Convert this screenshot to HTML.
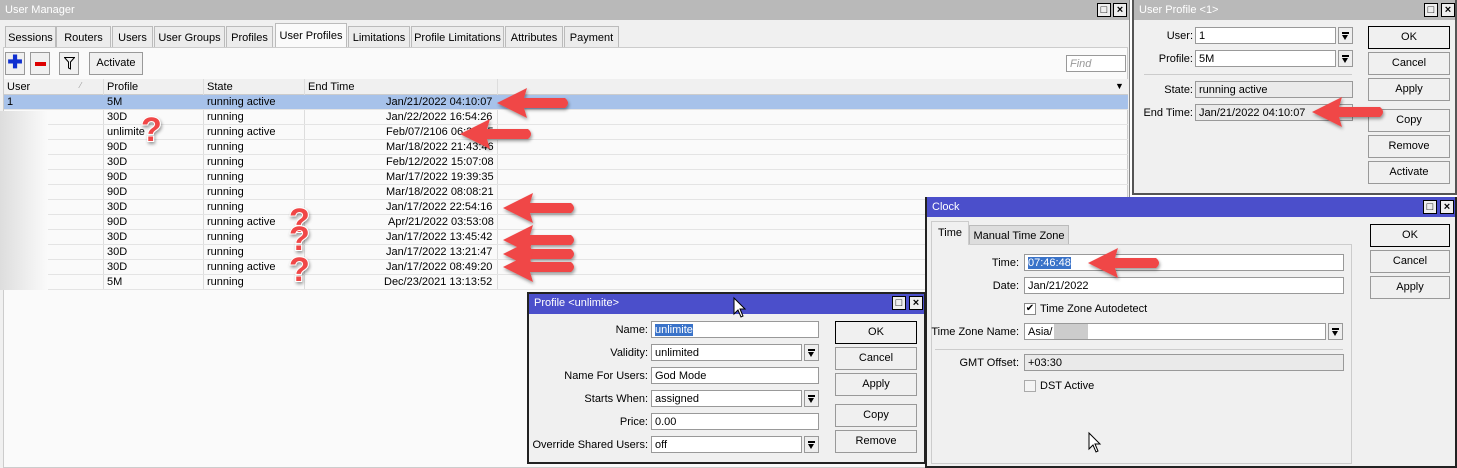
<!DOCTYPE html>
<html><head><meta charset="utf-8"><style>
*{box-sizing:border-box;margin:0;padding:0}
body{width:1457px;height:468px;position:relative;overflow:hidden;background:#fff;font:11px "Liberation Sans",sans-serif;color:#000}
.abs{position:absolute}
.title{position:absolute;left:0;right:0;top:0;height:20px;color:#fff;padding:4px 0 0 5px;font-size:11px}
.wb{position:absolute;top:3px;width:14px;height:14px;border:1px solid #000;background:#eee;font-size:11px;line-height:12px;text-align:center;font-weight:bold}
.tab{position:absolute;top:26px;height:21px;border:1px solid #bbb;border-bottom:none;background:#ececec;padding-top:5px;text-align:center;white-space:nowrap}
.btn{position:absolute;border:1px solid #999;background:#f0f0f0;text-align:center;line-height:21px;height:23px}
.inp{position:absolute;height:17px;border:1px solid #999;background:#fff;padding:1px 3px;white-space:nowrap;line-height:14px}
.ro{background:#eaeaea}
.dd{position:absolute;width:15px;height:17px;border:1px solid #999;background:#eee}
.dd::before{content:"";position:absolute;left:3px;top:4px;width:7px;height:2px;background:#000}
.dd::after{content:"";position:absolute;left:3px;top:7px;border-left:3.5px solid transparent;border-right:3.5px solid transparent;border-top:5px solid #000}
.lbl{position:absolute;text-align:right;white-space:nowrap}
.row{position:absolute;left:5px;width:1123px;height:15px;border-bottom:1px solid #e4e4e4;white-space:nowrap}
.row span{position:absolute;top:1px}
</style></head><body>
<!-- User Manager -->
<div class="abs" style="left:0;top:0;width:1130px;height:468px;background:#f0f0f0;border-right:1px solid #888">
<div class="title" style="background:#b9b9b9">User Manager</div>
<div class="wb" style="left:1097px">□</div><div class="wb" style="left:1113px">×</div>
<div class="tab" style="left:5px;width:51px">Sessions</div>
<div class="tab" style="left:56px;width:55px">Routers</div>
<div class="tab" style="left:112px;width:41px">Users</div>
<div class="tab" style="left:154px;width:71px">User Groups</div>
<div class="tab" style="left:226px;width:47px">Profiles</div>
<div class="tab" style="left:275px;width:72px;top:23px;height:24px;background:#fafafa;padding-top:6px">User Profiles</div>
<div class="tab" style="left:348px;width:62px">Limitations</div>
<div class="tab" style="left:411px;width:93px">Profile Limitations</div>
<div class="tab" style="left:505px;width:58px">Attributes</div>
<div class="tab" style="left:564px;width:55px">Payment</div>
<div class="abs" style="left:3px;top:47px;width:1125px;height:421px;background:#fafafa;border:1px solid #ccc"></div>
<div class="btn" style="left:5px;top:52px;width:20px;color:#1030d0;font-weight:bold;font-size:18px;line-height:19px">✚</div>
<div class="btn" style="left:30px;top:52px;width:20px"><div class="abs" style="left:4px;top:9px;width:11px;height:4px;background:#d00"></div></div>
<div class="btn" style="left:59px;top:52px;width:20px"><svg class="abs" style="left:4px;top:4px" width="11" height="13"><path d="M0.5 0.5H10.5L6.5 5V12L4.5 11V5Z" fill="none" stroke="#000"/></svg></div>
<div class="btn" style="left:89px;top:52px;width:54px">Activate</div>
<div class="inp" style="left:1066px;top:55px;width:60px;color:#999;font-style:italic">Find</div>
<div class="abs" style="left:4px;top:79px;width:1124px;height:16px;background:#f0f0f0;border-bottom:1px solid #ccc"></div>
<div class="abs" style="left:7px;top:81px">User</div>
<div class="abs" style="left:80px;top:81px;font-size:8px;color:#999">⁄</div>
<div class="abs" style="left:107px;top:81px">Profile</div>
<div class="abs" style="left:207px;top:81px">State</div>
<div class="abs" style="left:308px;top:81px">End Time</div>
<div class="abs" style="left:1115px;top:81px;font-size:9px">▼</div>
<div class="abs" style="left:103px;top:79px;width:1px;height:211px;background:#ddd"></div>
<div class="abs" style="left:203px;top:79px;width:1px;height:211px;background:#ddd"></div>
<div class="abs" style="left:304px;top:79px;width:1px;height:211px;background:#ddd"></div>
<div class="abs" style="left:497px;top:79px;width:1px;height:211px;background:#ddd"></div>
<div class="row" style="top:95px;background:#a7c2ea;left:4px;width:1124px"><span style="left:3px">1</span><span style="left:103px">5M</span><span style="left:203px">running active</span><span style="left:382px">Jan/21/2022 04:10:07</span></div>
<div class="row" style="top:110px"><span style="left:102px">30D</span><span style="left:202px">running</span><span style="left:381px">Jan/22/2022 16:54:26</span></div>
<div class="row" style="top:125px"><span style="left:102px">unlimite</span><span style="left:202px">running active</span><span style="left:381px">Feb/07/2106 06:28:15</span></div>
<div class="row" style="top:140px"><span style="left:102px">90D</span><span style="left:202px">running</span><span style="left:381px">Mar/18/2022 21:43:46</span></div>
<div class="row" style="top:155px"><span style="left:102px">30D</span><span style="left:202px">running</span><span style="left:381px">Feb/12/2022 15:07:08</span></div>
<div class="row" style="top:170px"><span style="left:102px">90D</span><span style="left:202px">running</span><span style="left:381px">Mar/17/2022 19:39:35</span></div>
<div class="row" style="top:185px"><span style="left:102px">90D</span><span style="left:202px">running</span><span style="left:381px">Mar/18/2022 08:08:21</span></div>
<div class="row" style="top:200px"><span style="left:102px">30D</span><span style="left:202px">running</span><span style="left:381px">Jan/17/2022 22:54:16</span></div>
<div class="row" style="top:215px"><span style="left:102px">90D</span><span style="left:202px">running active</span><span style="left:383px">Apr/21/2022 03:53:08</span></div>
<div class="row" style="top:230px"><span style="left:102px">30D</span><span style="left:202px">running</span><span style="left:381px">Jan/17/2022 13:45:42</span></div>
<div class="row" style="top:245px"><span style="left:102px">30D</span><span style="left:202px">running</span><span style="left:381px">Jan/17/2022 13:21:47</span></div>
<div class="row" style="top:260px"><span style="left:102px">30D</span><span style="left:202px">running active</span><span style="left:381px">Jan/17/2022 08:49:20</span></div>
<div class="row" style="top:275px"><span style="left:102px">5M</span><span style="left:202px">running</span><span style="left:379px">Dec/23/2021 13:13:52</span></div>
<div class="abs" style="left:0;top:111px;width:48px;height:179px;background:linear-gradient(90deg,#ddd,#f2f2f2 70%,#fafafa)"></div>
</div>
<!-- User Profile <1> -->
<div class="abs" style="left:1132px;top:0;width:325px;height:195px;background:#f0f0f0;border:2px solid #555;border-top:none">
<div class="title" style="background:#b9b9b9">User Profile &lt;1&gt;</div>
<div class="wb" style="left:290px">□</div><div class="wb" style="left:307px">×</div>
<div class="lbl" style="left:0;width:59px;top:30px">User:</div>
<div class="inp" style="left:61px;top:27px;width:141px">1</div><div class="dd" style="left:204px;top:27px"></div>
<div class="lbl" style="left:0;width:59px;top:53px">Profile:</div>
<div class="inp" style="left:61px;top:50px;width:141px">5M</div><div class="dd" style="left:204px;top:50px"></div>
<div class="abs" style="left:10px;top:74px;width:208px;height:1px;background:#ccc"></div>
<div class="lbl" style="left:0;width:59px;top:84px">State:</div>
<div class="inp ro" style="left:61px;top:81px;width:158px">running active</div>
<div class="lbl" style="left:0;width:59px;top:107px">End Time:</div>
<div class="inp ro" style="left:61px;top:104px;width:158px">Jan/21/2022 04:10:07</div>
<div class="btn" style="left:234px;top:26px;width:82px;border-color:#000">OK</div>
<div class="btn" style="left:234px;top:52px;width:82px">Cancel</div>
<div class="btn" style="left:234px;top:78px;width:82px">Apply</div>
<div class="btn" style="left:234px;top:109px;width:82px">Copy</div>
<div class="btn" style="left:234px;top:135px;width:82px">Remove</div>
<div class="btn" style="left:234px;top:161px;width:82px">Activate</div>
</div>
<!-- Clock -->
<div class="abs" style="left:925px;top:197px;width:532px;height:271px;background:#f0f0f0;border:2px solid #222;border-top:none">
<div class="title" style="background:#4b4fcb">Clock</div>
<div class="wb" style="left:496px">□</div><div class="wb" style="left:513px">×</div>
<div class="abs" style="left:4px;top:47px;width:421px;height:220px;background:#f0f0f0;border:1px solid #ccc"></div>
<div class="tab" style="left:4px;top:24px;height:24px;width:38px;background:#f0f0f0;border-color:#ccc">Time</div>
<div class="tab" style="left:42px;top:28px;height:19px;width:100px;background:#ddd;padding-top:4px">Manual Time Zone</div>
<div class="lbl" style="left:0;width:92px;top:60px">Time:</div>
<div class="inp" style="left:97px;top:57px;width:320px"><span style="background:#3a73c9;color:#fff">07:46:48</span></div>
<div class="lbl" style="left:0;width:92px;top:83px">Date:</div>
<div class="inp" style="left:97px;top:80px;width:320px">Jan/21/2022</div>
<div class="abs" style="left:97px;top:106px;width:12px;height:12px;border:1px solid #888;background:#fff;font-size:10px;line-height:10px;text-align:center">✔</div>
<div class="abs" style="left:113px;top:106px">Time Zone Autodetect</div>
<div class="lbl" style="left:0;width:92px;top:129px">Time Zone Name:</div>
<div class="inp" style="left:97px;top:126px;width:302px">Asia/<span class="abs" style="left:29px;top:0;width:34px;height:15px;background:#ccc"></span></div>
<div class="dd" style="left:401px;top:126px"></div>
<div class="abs" style="left:8px;top:152px;width:408px;height:1px;background:#ccc"></div>
<div class="lbl" style="left:0;width:92px;top:160px">GMT Offset:</div>
<div class="inp ro" style="left:97px;top:157px;width:320px">+03:30</div>
<div class="abs" style="left:97px;top:183px;width:12px;height:12px;border:1px solid #aaa;background:#f4f4f4"></div>
<div class="abs" style="left:113px;top:183px">DST Active</div>
<div class="btn" style="left:443px;top:27px;width:80px;border-color:#000">OK</div>
<div class="btn" style="left:443px;top:53px;width:80px">Cancel</div>
<div class="btn" style="left:443px;top:79px;width:80px">Apply</div>
</div>
<!-- Profile <unlimite> -->
<div class="abs" style="left:527px;top:292px;width:399px;height:172px;background:#f0f0f0;border:2px solid #222">
<div class="title" style="background:#4b4fcb;top:0;height:20px;padding-top:3px">Profile &lt;unlimite&gt;</div>
<div class="wb" style="left:363px;top:2px">□</div><div class="wb" style="left:380px;top:2px">×</div>
<div class="lbl" style="left:0;width:119px;top:30px">Name:</div>
<div class="inp" style="left:122px;top:27px;width:168px"><span style="background:#3a73c9;color:#fff">unlimite</span></div>
<div class="lbl" style="left:0;width:119px;top:53px">Validity:</div>
<div class="inp" style="left:122px;top:50px;width:151px">unlimited</div><div class="dd" style="left:275px;top:50px"></div>
<div class="lbl" style="left:0;width:119px;top:76px">Name For Users:</div>
<div class="inp" style="left:122px;top:73px;width:168px">God Mode</div>
<div class="lbl" style="left:0;width:119px;top:99px">Starts When:</div>
<div class="inp" style="left:122px;top:96px;width:151px">assigned</div><div class="dd" style="left:275px;top:96px"></div>
<div class="lbl" style="left:0;width:119px;top:122px">Price:</div>
<div class="inp" style="left:122px;top:119px;width:168px">0.00</div>
<div class="lbl" style="left:0;width:119px;top:145px">Override Shared Users:</div>
<div class="inp" style="left:122px;top:142px;width:151px">off</div><div class="dd" style="left:275px;top:142px"></div>
<div class="btn" style="left:306px;top:27px;width:82px;border-color:#000">OK</div>
<div class="btn" style="left:306px;top:53px;width:82px">Cancel</div>
<div class="btn" style="left:306px;top:79px;width:82px">Apply</div>
<div class="btn" style="left:306px;top:110px;width:82px">Copy</div>
<div class="btn" style="left:306px;top:136px;width:82px">Remove</div>
</div>
<!-- overlay arrows -->
<svg class="abs" style="left:0;top:0" width="1457" height="468">
<defs><filter id="s"><feDropShadow dx="1" dy="2" stdDeviation="1.5" flood-opacity="0.4"/></filter>
<g id="ar"><path d="M0 0 L30 -15 L27 -5 L68 -5 Q74 0 68 5 L27 5 L30 15 Z" fill="#f04646"/></g>
<g id="q"><text font-family="Liberation Sans" font-weight="bold" font-size="34" fill="#f04646" stroke="#fff" stroke-width="2" paint-order="stroke">?</text></g></defs>
<g filter="url(#s)">
<use href="#ar" x="497" y="103"/><use href="#ar" x="460" y="134"/><use href="#ar" x="503" y="208"/>
<use href="#ar" x="503" y="240"/><use href="#ar" x="503" y="254"/><use href="#ar" x="503" y="267"/>
<use href="#ar" x="1312" y="112"/><use href="#ar" x="1088" y="263"/>
<use href="#q" x="141" y="141"/><use href="#q" x="289" y="232"/><use href="#q" x="289" y="250"/><use href="#q" x="289" y="281"/>
</g>
<path d="M734 298 L734 314 L738 310 L741 317 L743 316 L740 309 L745 309 Z" fill="#fff" stroke="#000"/>
<path d="M1089 433 L1089 449 L1093 445 L1096 452 L1098 451 L1095 444 L1100 444 Z" fill="#fff" stroke="#000"/>
</svg>
</body></html>
